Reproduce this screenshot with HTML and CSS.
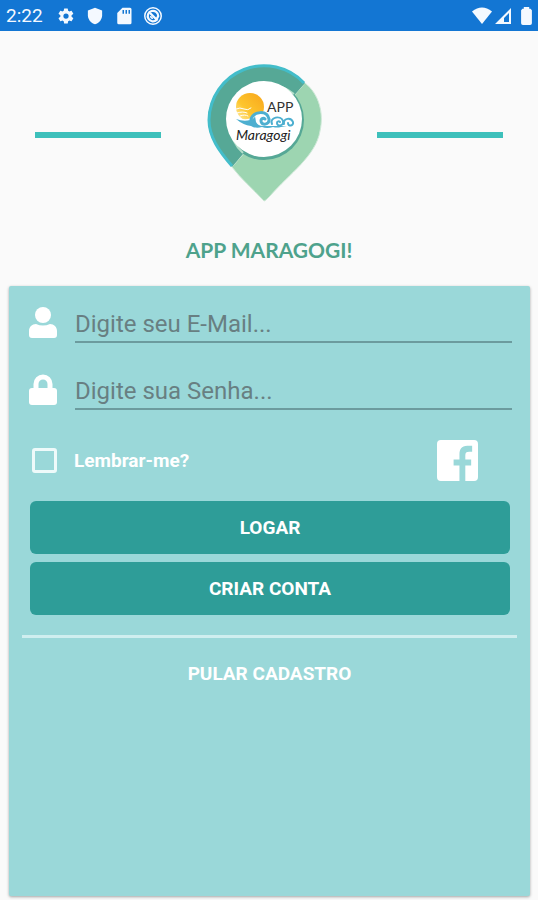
FILE: index.html
```html
<!DOCTYPE html>
<html lang="pt-BR">
<head>
<meta charset="utf-8">
<meta name="viewport" content="width=device-width, initial-scale=1">
<title>APP Maragogi</title>
<link rel="stylesheet" href="styles.css">
</head>
<body>
<header class="status">
  <span class="status-time">2:22</span>
  <div class="status-group status-left">
    <svg class="status-icon" viewBox="0 0 24 24" aria-hidden="true"><path fill="currentColor" fill-rule="evenodd" d="M19.4 13a7.500 7.500 0 0 0 0-2l2.100-1.600a.5.5 0 0 0 .1-.7l-2-3.400a.5.5 0 0 0-.6-.2l-2.500 1a7.300 7.300 0 0 0-1.700-1l-.4-2.700a.5.5 0 0 0-.5-.4h-4a.5.5 0 0 0-.5.4L9 5.100a7.700 7.700 0 0 0-1.700 1l-2.500-1a.5.5 0 0 0-.6.200l-2 3.400a.5.5 0 0 0 .1.700L4.500 11a7.900 7.900 0 0 0 0 2l-2.200 1.600a.5.5 0 0 0-.1.700l2 3.400c.1.200.4.300.6.200l2.500-1a7.300 7.300 0 0 0 1.700 1l.4 2.700c0 .2.200.4.500.4h4c.3 0 .5-.2.500-.4l.4-2.700a7.700 7.700 0 0 0 1.700-1l2.500 1c.2.100.5 0 .6-.2l2-3.400a.5.5 0 0 0-.1-.7zM12 15.500a3.500 3.500 0 1 1 0-7 3.500 3.500 0 0 1 0 7z"/></svg>
    <svg class="status-icon" viewBox="0 0 24 24" aria-hidden="true"><path fill="currentColor" d="M12 1 2.500 4.800V11c0 5.500 4 10.500 9.500 12 5.500-1.500 9.500-6.500 9.500-12V4.800z"/></svg>
    <svg class="status-icon" viewBox="0 0 24 24" aria-hidden="true"><path fill="currentColor" fill-rule="evenodd" d="M20 1H10L3 8v13a2 2 0 0 0 2 2h15a2 2 0 0 0 2-2V3a2 2 0 0 0-2-2zM10 4h2v5h-2zm4 0h2v5h-2zm4 0h2v5h-2z"/></svg>
    <svg class="status-icon" viewBox="0 0 24 24" aria-hidden="true"><g fill="none" stroke="currentColor" stroke-width="2"><circle cx="12" cy="12" r="11"/><path stroke-width="3" d="M17 17A7 7 0 1 1 19 12L17 16"/><path stroke-width="3" d="m8 8 10 10"/><path d="M9 12a3 3 0 0 0 3 3"/></g></svg>
  </div>
  <div class="status-group status-right">
    <svg class="status-wifi" viewBox="0 0 20 18" aria-hidden="true"><path fill="currentColor" d="M0 4.500Q10-3.500 20 4.500L10 17z"/></svg>
    <svg class="status-signal" viewBox="0 0 18 18" aria-hidden="true"><path fill="currentColor" fill-rule="evenodd" d="M17 1v16H1zM15 6l-5 5v4h5z"/></svg>
    <svg class="status-battery" viewBox="0 0 12 20" aria-hidden="true"><path fill="currentColor" d="M3 0h6v2h1.500L12 3.500V18a2 2 0 0 1-2 2H2a2 2 0 0 1-2-2V3.500L1.500 2H3z"/></svg>
  </div>
</header>
<main class="screen">
  <section class="hero">
    <div class="brand">
      <span class="brand-line"></span>
      <svg class="logo" viewBox="0 0 148 160" role="img" aria-label="APP Maragogi">
        <defs>
          <linearGradient id="sun" x1="1" y1="0" x2="0" y2="1"><stop offset="0" stop-color="#f8a51b"/><stop offset=".6" stop-color="#fdc52d"/><stop offset="1" stop-color="#fff0ae"/></linearGradient>
        </defs>
        <path fill="#9dd5b1" stroke="#cfe9d8" stroke-width="1" d="M69 146C57 133 46 124 37 112L110 28C124 39 129 58 125 76C121 101 94 119 75 141C72 144 70 146 69 146Z"/>
        <path fill="#56a896" d="M37 112C24 97 13 82 13 65A56 56 0 0 1 110 28L48 99Z"/>
        <path fill="none" stroke="#43bdca" stroke-width="3" d="M37 111C24 96 14 82 14 65A55 55 0 0 1 109 28"/>
        <circle cx="69" cy="65" r="40" fill="#56a896"/>
        <path fill="none" stroke="#b5dfca" stroke-width="2" d="M48 98A39 39 0 0 1 99 39"/>
        <circle cx="69" cy="64" r="38" fill="#fff"/>
        <circle cx="55" cy="52" r="14" fill="url(#sun)"/>
        <path fill="none" stroke="#fff" stroke-width="1" stroke-linecap="round" d="M41 54q4-2 8 0t7-1M42 58q6-2 10 0M45 61q5-2 8 0"/>
        <path fill="#fff" d="M44 63q8 3 13-1 4-6 11-5 6 2 7 6 7-4 12 1 6-3 9 2-1 6-8 6H62q-10-1-18-9z"/>
        <path fill="#4dafd0" d="M41 64q8 3 14 1 4-1 5-4l1 6q2 4 7 4h24l-6 1q-4 1-8 0-6 2-11 0-6 2-11-1-8-1-15-7z"/>
        <g fill="none" stroke="#4dafd0" stroke-linecap="round">
          <path stroke-width="3" d="M56 64c3-8 16-9 18 0 1 6-8 7-8 2 0-3 3-3 4-2"/>
          <path stroke-width="2" d="M77 69c-3-7 9-9 11-3 1 5-6 6-6 2 0-2 2-2 3-1M89 69c-1-6 7-7 9-2 1 4-5 5-5 1"/>
        </g>
        <text class="logo-app" x="72" y="57">APP</text>
        <text class="logo-name" x="41" y="85">Maragogi</text>
      </svg>
      <span class="brand-line"></span>
    </div>
    <h1 class="title">APP MARAGOGI!</h1>
  </section>
  <form class="card">
    <div class="field">
      <label class="field-icon" for="email" aria-label="E-Mail"><svg viewBox="0 0 28 32" aria-hidden="true"><circle cx="14" cy="8" r="8" fill="currentColor"/><path fill="currentColor" d="M7 17q7 3 14 0c4 0 7 3 7 7v4a3 3 0 0 1-3 3H3a3 3 0 0 1-3-3v-4c0-4 3-7 7-7z"/></svg></label>
      <input class="field-input" id="email" type="email" placeholder="Digite seu E-Mail...">
    </div>
    <div class="field">
      <label class="field-icon" for="senha" aria-label="Senha"><svg viewBox="0 0 28 32" aria-hidden="true"><rect y="14" width="28" height="17" rx="3" fill="currentColor"/><path fill="none" stroke="currentColor" stroke-width="5" d="M7 16V10a7 7 0 0 1 14 0v6"/></svg></label>
      <input class="field-input" id="senha" type="password" placeholder="Digite sua Senha...">
    </div>
    <div class="options">
      <label class="remember"><input class="check" type="checkbox">Lembrar-me?</label>
      <button class="facebook" type="button" aria-label="Facebook"><svg viewBox="0 0 42 42" aria-hidden="true"><path fill="currentColor" d="M4 0h34a4 4 0 0 1 4 4v34a4 4 0 0 1-4 4h-9V26h6v-6h-6v-4c0-3 1-4 4-4h3V6h-5c-6 0-8 4-8 9v5h-6v6h6v16H4a4 4 0 0 1-4-4V4a4 4 0 0 1 4-4z"/></svg></button>
    </div>
    <div class="actions">
      <button class="action" type="submit">LOGAR</button>
      <button class="action" type="button">CRIAR CONTA</button>
    </div>
    <hr class="divider">
    <button class="skip" type="button">PULAR CADASTRO</button>
  </form>
</main>
</body>
</html>
```
FILE: styles.css
```css
* { box-sizing: border-box; }

body {
  margin: 0;
  min-height: 100vh;
  display: flex;
  flex-direction: column;
  background: #fafafa;
  color: #fff;
  font-family: Roboto, "Liberation Sans", sans-serif;
}

svg { display: block; }

button {
  padding: 0;
  border: 0;
  background: none;
  color: inherit;
  font: inherit;
  cursor: pointer;
}

.status {
  display: flex;
  align-items: center;
  height: 31px;
  padding: 0 6px;
  background: #1376d3;
  color: #f4f9ff;
}

.status-time { font-size: 19px; line-height: 31px; }
.status-group { display: flex; align-items: center; }
.status-left { gap: 11px; margin-left: 14px; }
.status-right { gap: 2px; margin-left: auto; }
.status-icon { width: 18px; height: 18px; }
.status-wifi { width: 20px; height: 18px; }
.status-signal { width: 18px; height: 18px; }
.status-battery { width: 11px; height: 18px; margin-left: 7px; }

.screen {
  flex: 1;
  display: flex;
  flex-direction: column;
}

.hero { padding: 24px 35px 22px; }

.brand {
  display: flex;
  align-items: center;
  gap: 34px;
}

.brand-line {
  flex: 1;
  height: 6px;
  background: #3dc0bb;
}

.logo { width: 148px; height: 160px; }

.logo-app {
  fill: #333;
  font: 14px Lato, sans-serif;
}

.logo-name {
  fill: #222;
  font: italic 14px Lato, sans-serif;
}

.title {
  margin: 21px 0 0;
  color: #4ea28c;
  font: 700 21px/28px Lato, sans-serif;
  text-align: center;
}

.card {
  flex: 1;
  display: flex;
  flex-direction: column;
  margin: 0 8px 4px 9px;
  padding: 17px 20px;
  border-radius: 2px;
  background: #9ad8d9;
  box-shadow: 0 1px 3px rgba(0, 0, 0, 0.35);
}

.field {
  display: flex;
  align-items: center;
  gap: 18px;
  margin: 0 -2px 27px 0;
}

.field-icon { width: 28px; }

.field-input {
  flex: 1;
  min-width: 0;
  height: 40px;
  padding: 3px 0 0;
  border: 0;
  border-bottom: 2px solid #6c9b9e;
  border-radius: 0;
  outline: 0;
  background: none;
  color: #333;
  font: 24px Roboto, sans-serif;
}

.field-input::placeholder { color: #687f82; opacity: 1; }

.options {
  display: flex;
  align-items: center;
  justify-content: space-between;
  margin: 3px 32px 20px 3px;
}

.remember {
  display: flex;
  align-items: center;
  gap: 17px;
  font-size: 19px;
  font-weight: 700;
}

.check {
  appearance: none;
  width: 25px;
  height: 25px;
  margin: 0;
  border: 3px solid #eefafa;
  border-radius: 3px;
}

.check:checked { background: #2e9d98; }

.facebook svg { width: 41px; height: 41px; }

.actions {
  display: flex;
  flex-direction: column;
  gap: 8px;
  padding: 0 0 0 1px;
}

.action {
  height: 53px;
  border-radius: 6px;
  background: #2e9d98;
  font-size: 19px;
  font-weight: 700;
}

.divider {
  align-self: stretch;
  height: 3px;
  margin: 20px -7px;
  border: 0;
  background: #cfeeef;
}

.skip {
  align-self: center;
  font-size: 19px;
  font-weight: 700;
  line-height: 32px;
}
```
